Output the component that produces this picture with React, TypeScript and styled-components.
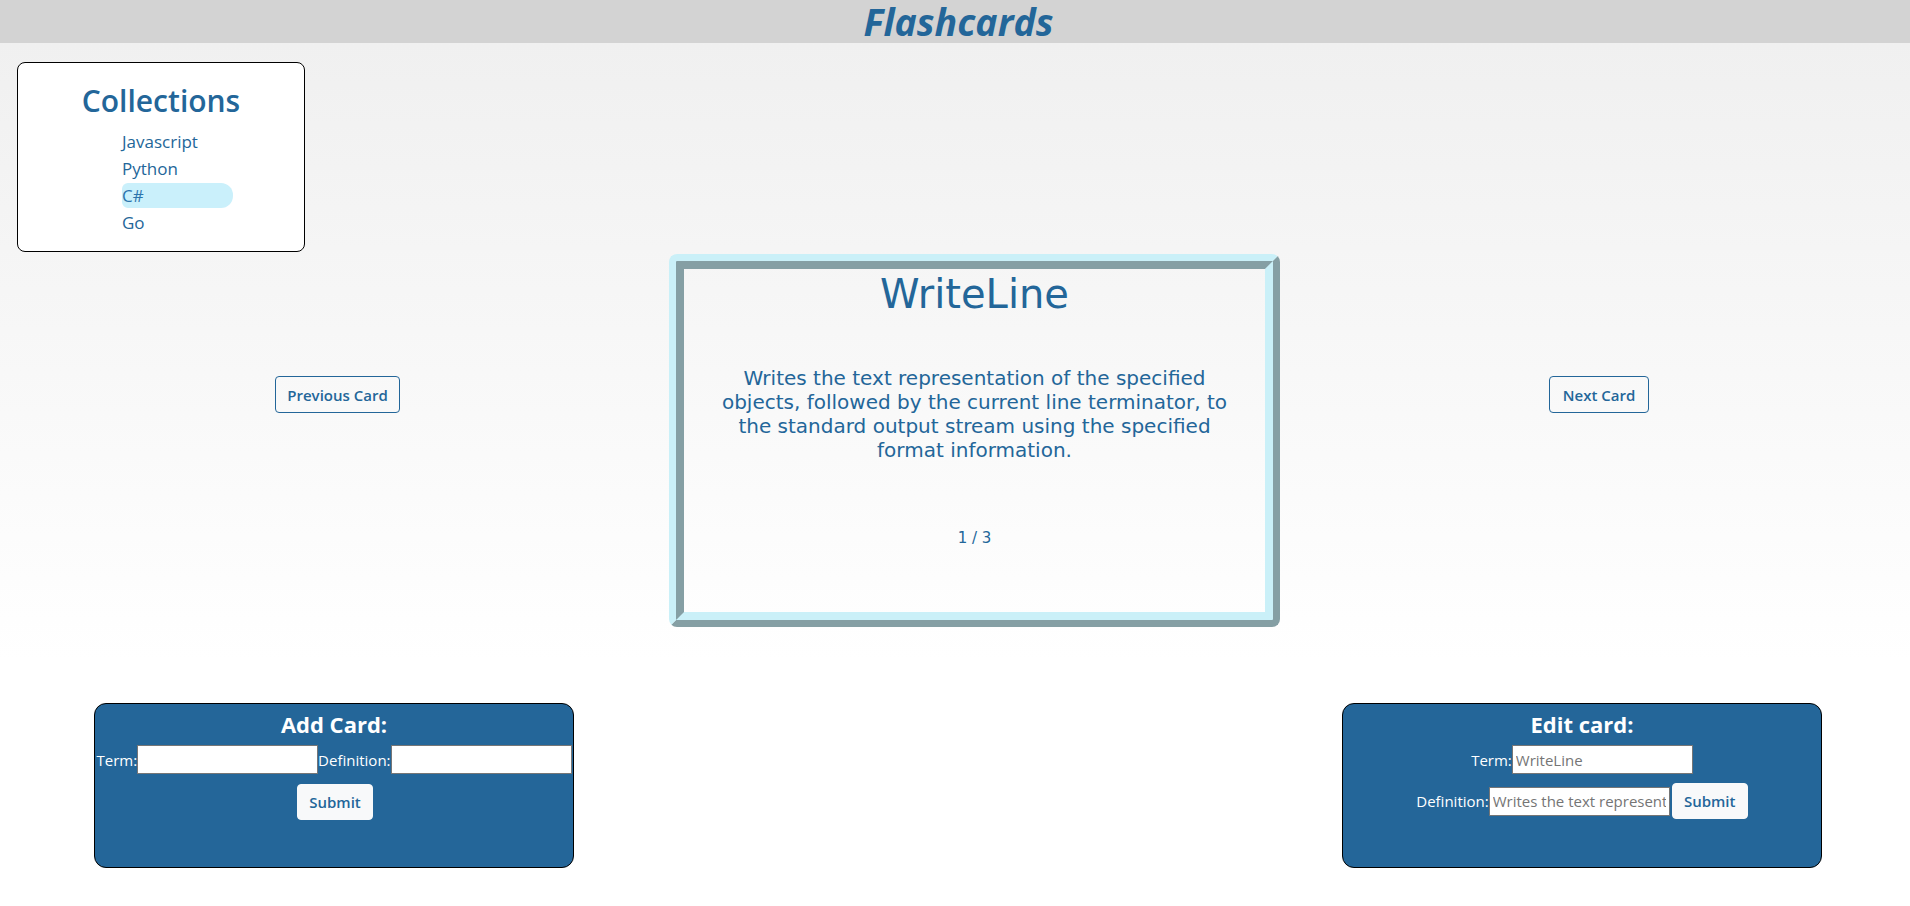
import React from "react";
import styled, { createGlobalStyle } from "styled-components";

const GlobalStyle = createGlobalStyle`
  html, body { margin: 0; padding: 0; background: #ffffff; }
  body { font-family: "Open Sans", "Noto Sans", sans-serif; }
  * { box-sizing: border-box; }
`;

const BLUE = "#236699";
const UI = `"Open Sans", "Noto Sans", sans-serif`;
const CARD_FONT = `"DejaVu Sans", Verdana, sans-serif`;

const Header = styled.header`
  height: 43px;
  background: #d3d3d3;
  display: flex;
  justify-content: center;
  align-items: center;
`;

const Title = styled.h1`
  margin: 0;
  padding-left: 7px;
  font-family: ${UI};
  font-style: italic;
  font-weight: 700;
  font-size: 37.5px;
  line-height: 43px;
  color: ${BLUE};
`;

const Main = styled.main`
  background: linear-gradient(#f0f0f0, #ffffff);
  padding: 19px 0 33px 0;
`;

const CollectionsBox = styled.section`
  margin-left: 17px;
  width: 288px;
  height: 190px;
  background: #ffffff;
  border: 1px solid #000;
  border-radius: 8px;
  padding-top: 17px;
`;

const CollectionsTitle = styled.h2`
  margin: 0;
  text-align: center;
  font-family: ${UI};
  font-weight: 600;
  font-size: 30px;
  line-height: 42px;
  color: ${BLUE};
`;

const CollectionList = styled.ul`
  list-style: none;
  margin: 7px 0 0 104px;
  padding: 0;
  width: 111px;
  display: flex;
  flex-direction: column;
  gap: 2px;
`;

const CollectionItem = styled.li<{ $active?: boolean }>`
  height: 25px;
  line-height: 25px;
  font-family: ${UI};
  font-size: 17px;
  color: ${(p) => (p.$active ? "#2d74ab" : BLUE)};
  background: ${(p) => (p.$active ? "#caf0fb" : "transparent")};
  border-radius: 6px 12px 12px 6px;
  cursor: pointer;
`;

const CardRow = styled.div`
  display: flex;
  align-items: flex-start;
  gap: 269px;
  padding-left: 275px;
  margin-top: 2px;
`;

const NavButton = styled.button<{ $width: number }>`
  margin-top: 122px;
  width: ${(p) => p.$width}px;
  height: 37px;
  padding: 0;
  background: transparent;
  border: 1px solid ${BLUE};
  border-radius: 4px;
  font-family: ${UI};
  font-weight: 600;
  font-size: 15px;
  color: ${BLUE};
  cursor: pointer;
`;

const Card = styled.div`
  width: 611px;
  height: 373px;
  border: 15px ridge #caf0f8;
  border-radius: 8px;
  display: flex;
  flex-direction: column;
  align-items: center;
  color: ${BLUE};
  font-family: ${CARD_FONT};
`;

const CardTerm = styled.h2`
  margin: 1px 0 0 0;
  font-weight: 400;
  font-size: 40px;
  line-height: 48px;
`;

const CardDefinition = styled.p`
  margin: 48px 0 0 0;
  width: 526px;
  text-align: center;
  font-size: 20px;
  line-height: 24px;
`;

const CardCount = styled.div`
  margin-top: 67px;
  font-size: 15px;
  line-height: 18px;
`;

const FormsRow = styled.div`
  display: flex;
  justify-content: space-between;
  padding: 0 88px 0 94px;
  margin-top: 43px;
`;

const Panel = styled.form`
  width: 480px;
  height: 165px;
  background: #246699;
  border: 1px solid #000;
  border-radius: 12px;
  padding-top: 5px;
  color: #ffffff;
  font-family: ${UI};
  display: flex;
  flex-direction: column;
  align-items: center;
`;

const PanelTitle = styled.h3`
  margin: 0;
  font-weight: 700;
  font-size: 22px;
  line-height: 30px;
`;

const FieldRow = styled.div<{ $gap: number }>`
  display: flex;
  align-items: center;
  justify-content: center;
  margin-top: ${(p) => p.$gap}px;
`;

const Label = styled.label`
  display: flex;
  align-items: center;
  font-size: 15px;
  line-height: 20px;
`;

const TextInput = styled.input`
  width: 181px;
  height: 29px;
  padding: 1px 3px;
  border: 1px solid #767676;
  background: #ffffff;
  font-family: ${UI};
  font-size: 15px;
  color: #222;
  &::placeholder { color: #757575; }
`;

const SubmitButton = styled.button`
  height: 36px;
  width: 76px;
  padding: 0;
  margin-left: 2px;
  background: #f8f9fa;
  border: 1px solid #f8f9fa;
  border-radius: 4px;
  font-family: ${UI};
  font-weight: 600;
  font-size: 15px;
  color: ${BLUE};
  cursor: pointer;
`;

const collections = ["Javascript", "Python", "C#", "Go"];

export default function App() {
  return (
    <>
      <GlobalStyle />
      <Header>
        <Title>Flashcards</Title>
      </Header>
      <Main>
        <CollectionsBox>
          <CollectionsTitle>Collections</CollectionsTitle>
          <CollectionList>
            {collections.map((c) => (
              <CollectionItem key={c} $active={c === "C#"}>
                {c}
              </CollectionItem>
            ))}
          </CollectionList>
        </CollectionsBox>
        <CardRow>
          <NavButton type="button" $width={125}>
            Previous Card
          </NavButton>
          <Card>
            <CardTerm>WriteLine</CardTerm>
            <CardDefinition>
              Writes the text representation of the specified objects, followed by the current line
              terminator, to the standard output stream using the specified format information.
            </CardDefinition>
            <CardCount>1 / 3</CardCount>
          </Card>
          <NavButton type="button" $width={100}>
            Next Card
          </NavButton>
        </CardRow>
      </Main>
      <FormsRow>
        <Panel onSubmit={(e) => e.preventDefault()}>
          <PanelTitle>Add Card:</PanelTitle>
          <FieldRow $gap={6}>
            <Label>
              Term:
              <TextInput type="text" />
            </Label>
            <Label>
              Definition:
              <TextInput type="text" />
            </Label>
          </FieldRow>
          <FieldRow $gap={10}>
            <SubmitButton type="submit">Submit</SubmitButton>
          </FieldRow>
        </Panel>
        <Panel onSubmit={(e) => e.preventDefault()}>
          <PanelTitle>Edit card:</PanelTitle>
          <FieldRow $gap={6}>
            <Label>
              Term:
              <TextInput type="text" placeholder="WriteLine" />
            </Label>
          </FieldRow>
          <FieldRow $gap={9}>
            <Label>
              Definition:
              <TextInput
                type="text"
                placeholder="Writes the text representation of the specified objects, followed by the current line terminator, to the standard output stream using the specified format information."
              />
            </Label>
            <SubmitButton type="submit">Submit</SubmitButton>
          </FieldRow>
        </Panel>
      </FormsRow>
    </>
  );
}
